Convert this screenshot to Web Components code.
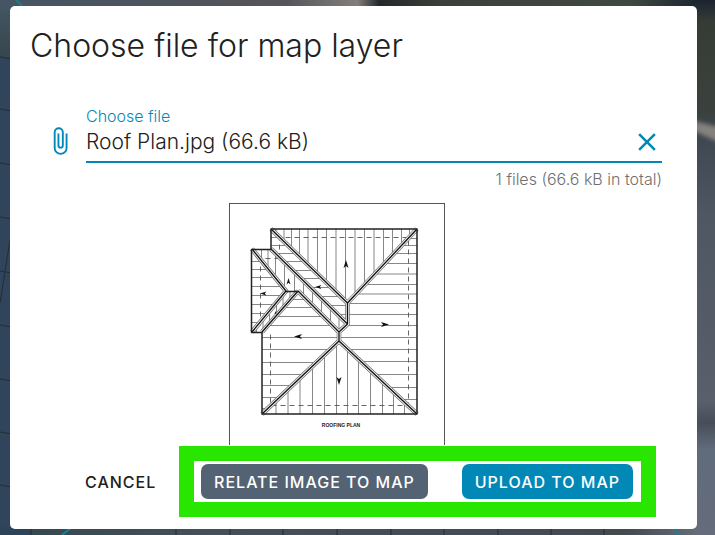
<!DOCTYPE html>
<html lang="en">
<head>
<meta charset="utf-8">
<meta name="viewport" content="width=device-width, initial-scale=1">
<title>Choose file for map layer</title>
<style>
  html, body { margin: 0; min-height: 100%; }
  body { font-family: Inter, "Open Sans", sans-serif; color: #212121; --accent: #0288b7; --slate: #536374; }
</style>
</head>
<body>
<map-backdrop>
  <upload-dialog heading="Choose file for map layer">
    <file-field label="Choose file" value="Roof Plan.jpg (66.6 kB)">1 files (66.6 kB in total)</file-field>
    <roof-preview></roof-preview>
    <action-button slot="actions" kind="text">CANCEL</action-button>
    <highlight-frame slot="actions">
      <action-button kind="slate">RELATE IMAGE TO MAP</action-button>
      <action-button kind="primary">UPLOAD TO MAP</action-button>
    </highlight-frame>
  </upload-dialog>
</map-backdrop>
<script>
const define = (name, html, setup) => {
  const template = document.createElement('template');
  template.innerHTML = html;
  customElements.define(name, class extends HTMLElement {
    connectedCallback() {
      if (this.shadowRoot) return;
      this.attachShadow({ mode: 'open' }).append(template.content.cloneNode(true));
      if (setup) setup(this, this.shadowRoot);
    }
  });
};

define('map-backdrop', `
<style>
  :host { display: grid; grid-template-areas: "all"; min-height: 100vh; background: #30455b; overflow: hidden; }
  .map { grid-area: all; width: 100%; height: 100%; min-height: 0; contain: size; }
  .content { grid-area: all; display: grid; padding: 6px 18px 6px 10px; z-index: 1; }
</style>
<svg class="map" viewBox="0 0 715 535" preserveAspectRatio="none" aria-hidden="true">
  <defs>
    <linearGradient id="side" x2="0" y2="1">
      <stop offset="0" stop-color="#1b2430"/><stop offset=".04" stop-color="#353c36"/><stop offset=".21" stop-color="#3b423d"/>
      <stop offset=".25" stop-color="#3e4650"/><stop offset=".4" stop-color="#4e5762"/>
      <stop offset=".75" stop-color="#595f6b"/><stop offset=".79" stop-color="#484e59"/><stop offset=".84" stop-color="#606b7c"/><stop offset="1" stop-color="#656c7b"/>
    </linearGradient>
    <linearGradient id="top">
      <stop offset="0" stop-color="#455563"/><stop offset=".28" stop-color="#50545b"/><stop offset=".4" stop-color="#56555a"/>
      <stop offset=".5" stop-color="#827e7b"/><stop offset=".53" stop-color="#24282b"/><stop offset=".62" stop-color="#3a4138"/>
      <stop offset=".88" stop-color="#404940"/><stop offset="1" stop-color="#111c2b"/>
    </linearGradient>
    <linearGradient id="foot">
      <stop offset="0" stop-color="#2d4357"/><stop offset=".04" stop-color="#2d4357"/><stop offset=".045" stop-color="#354850"/>
      <stop offset=".3" stop-color="#445059"/><stop offset=".7" stop-color="#424c57"/><stop offset=".9" stop-color="#424b50"/><stop offset="1" stop-color="#656c7b"/>
    </linearGradient>
    <linearGradient id="corner" x2="0" y2="1">
      <stop offset="0" stop-color="#465766"/><stop offset="1" stop-color="#35464d"/>
    </linearGradient>
    <filter id="soft"><feGaussianBlur stdDeviation="2"/></filter>
  </defs>
  <path fill="#30455b" d="M0 0H715V535H0z"/>
  <path fill="url(#corner)" d="M0 0H12V58L0 56z"/>
  <path fill="url(#top)" d="M0 0H715V8H0z"/>
  <path fill="url(#side)" d="M695 0H715V535H695z"/>
  <path fill="#85827e" filter="url(#soft)" d="M690 120L722 128V144L690 129z"/>
  <path fill="url(#foot)" d="M0 527H697V535H0z"/>
  <path stroke="#242d34" fill="none" d="M0 57l12 2M0 109l12 2M0 163l12 2M0 217l12 2M0 271l12 2M0 325l12 2M0 379l12 2M0 432l12 2M0 485l12 2M10 240L0 303M31 527v8M176 529v6M230 528v7M283 528v7M337 528v7M391 528v7M444 528v7M498 528v7M551 528v7M604 528v7"/>
  <path stroke="#168094" stroke-width="2" d="M16 0l8 8M62 535l10-8M672 527l7 8"/>
</svg>
<div class="content"><slot></slot></div>`);

define('upload-dialog', `
<style>
  :host { display: flex; flex-direction: column; min-width: 0; background: #fff; border-radius: 5px; box-sizing: border-box; }
  h1 { margin: 0; padding: 20px 20px 0; font-size: 32px; line-height: 40px; font-weight: 300; }
  main { flex: 1; display: flex; flex-direction: column; align-items: center; padding: 40px 35px 0 34px; }
  footer { display: flex; align-items: center; justify-content: space-between; padding: 0 41px 12px 62px; }
</style>
<h1></h1>
<main><slot></slot></main>
<footer><slot name="actions"></slot></footer>`, (host, root) => {
  host.setAttribute('role', 'dialog');
  root.querySelector('h1').textContent = host.getAttribute('heading');
});

define('file-field', `
<style>
  :host { display: grid; grid-template-columns: 32px 1fr; column-gap: 10px; align-self: stretch; }
  button { border: 0; background: none; padding: 0; color: var(--accent); cursor: pointer; display: grid; place-items: center; }
  svg { display: block; fill: currentColor; }
  .clip { margin-top: 12px; height: 46px; }
  label { display: block; font-size: 16px; line-height: 20px; color: var(--accent); font-weight: 300; }
  .line { display: flex; align-items: center; height: 35px; border-bottom: 2px solid var(--accent); }
  input { flex: 1; min-width: 0; border: 0; outline: 0; padding: 0 0 4px; background: none; font: inherit; font-size: 21px; line-height: 26px; font-weight: 300; color: inherit; }
  .line button { padding-bottom: 4px; }
  .hint { grid-column: 2; text-align: right; font-size: 16px; line-height: 20px; padding-top: 5px; color: #707070; font-weight: 300; }
</style>
<button class="clip" type="button" aria-label="Attach file"><svg width="30" height="30" viewBox="0 0 24 24"><path d="M16.5 6v11.5a4 4 0 0 1-8 0V5a2.5 2.5 0 0 1 5 0v10.500a1 1 0 0 1-2 0V6H10v9.500a2.500 2.500 0 0 0 5 0V5a4 4 0 0 0-8 0v12.500a5.500 5.500 0 0 0 11 0V6z"/></svg></button>
<div>
  <label for="file"></label>
  <div class="line"><input id="file" type="text" readonly><button type="button" aria-label="Clear file"><svg width="30" height="30" viewBox="0 0 24 24"><path d="M19 6.410L17.590 5 12 10.590 6.410 5 5 6.410 10.590 12 5 17.590 6.410 19 12 13.410 17.590 19 19 17.590 13.410 12z"/></svg></button></div>
</div>
<div class="hint"><slot></slot></div>`, (host, root) => {
  root.querySelector('label').textContent = host.getAttribute('label');
  root.querySelector('input').value = host.getAttribute('value');
});

define('roof-preview', `
<style>
  :host { display: block; width: 214px; max-width: 100%; margin-top: 14px; margin-right: 33px; border: 1px solid #555; border-bottom: 0; }
  svg { display: block; width: 100%; }
  .hatch { stroke: #555; stroke-width: .7; fill: none; }
  .roof { fill: none; stroke-linejoin: round; }
  text { font: bold 5px "Liberation Sans", sans-serif; fill: #222; }
</style>
<svg viewBox="230 205 214 241" role="img" aria-label="Roofing plan drawing">
  <defs>
    <clipPath id="n"><path d="M271 230H417L347.500 304z"/></clipPath>
    <clipPath id="e"><path d="M417 230V415L339 342V333L347.500 325V304z"/></clipPath>
    <clipPath id="s"><path d="M262 415L339 342L417 415z"/></clipPath>
    <clipPath id="w"><path d="M262 415V333L298 292L339 333V342z"/></clipPath>
    <clipPath id="b"><path d="M271 230L347.500 304V325L271 250z"/></clipPath>
    <clipPath id="m"><path d="M252 250H271L347.500 325L339 333L298 292H286z"/></clipPath>
    <clipPath id="l"><path d="M252 250L286 292L252 333z"/></clipPath>
    <clipPath id="k"><path d="M286 292H298L262 333H252z"/></clipPath>
    <path id="ridges" d="M271 230L347.500 304L417 230M347.500 304V325L339 333V342L417 415M339 342L262 415M271 250L347.500 325M252 250L286 292L252 333M298 292L262 333M298 292L339 333"/>
    <path id="arrow" d="M0-5L2.500 3L0 1L-2.500 3z"/>
  </defs>
  <g class="hatch">
    <path clip-path="url(#n)" d="M276 230v80M284 230v80M291.500 230v80M299.500 230v80M308 230v80M317.500 230v80M326.500 230v80M336 230v80M345.500 230v80M355 230v80M364.500 230v80M374 230v80M383.500 230v80M392.500 230v80M401.500 230v80M409.500 230v80"/>
    <path clip-path="url(#e)" d="M330 239.500h90M330 246.500h90M330 254.500h90M330 264.500h90M330 275h90M330 285.500h90M330 295h90M330 304.500h90M330 315.500h90M330 326.500h90M330 338.500h90M330 350.500h90M330 362.500h90M330 375.500h90M330 388.500h90M330 400.500h90"/>
    <path clip-path="url(#s)" d="M276 340v75M288 340v75M300 340v75M312.500 340v75M324.500 340v75M336.500 340v75M347.500 340v75M358.500 340v75M370.500 340v75M382.500 340v75M393.500 340v75M404.500 340v75"/>
    <path clip-path="url(#w)" d="M262 300.500h90M262 308.500h90M262 317.500h90M262 326.500h90M262 338.500h90M262 350.500h90M262 363.500h90M262 375.500h90M262 386.500h90M262 398.500h90M262 409.500h90"/>
    <path clip-path="url(#b)" d="M271 238.500h80M271 246.500h80M271 254.500h80M271 262.500h80M271 271.500h80M271 279.500h80M271 288.500h80M271 297.500h80M271 306.500h80M271 315.500h80"/>
    <path clip-path="url(#m)" d="M261.500 250v90M268 250v90M275.500 250v90M284.500 250v90M294.500 250v90M303.500 250v90M312.500 250v90M321.500 250v90M330.500 250v90M339 250v90"/>
    <path clip-path="url(#l)" d="M250 262.500h40M250 270.500h40M250 278.500h40M250 287.500h40M250 296.500h40M250 305.500h40M250 314.500h40M250 323.500h40"/>
    <path clip-path="url(#k)" d="M256.500 290v50M263 290v50M269.500 290v50M276.500 290v50M283 290v50M290 290v50"/>
  </g>
  <path fill="none" stroke="#555" stroke-width=".9" stroke-dasharray="5 4" d="M279.500 259.500V238.500H408.500V406.500H270.500V332M279.500 259.500H260.500V330"/>
  <g class="roof">
    <use href="#ridges" stroke="#666" stroke-width="4.600"/>
    <use href="#ridges" stroke="#eee" stroke-width="3.300"/>
    <use href="#ridges" stroke="#111" stroke-width="1.300"/>
    <path stroke="#222" stroke-width="1.500" d="M271 230H417V415H262V333.500H251.500V250.500H271zM286 292.500H298"/>
  </g>
  <g fill="#111">
    <use href="#arrow" transform="translate(346 266)"/>
    <use href="#arrow" transform="translate(384 325.500) rotate(90)"/>
    <use href="#arrow" transform="translate(299 337.500) rotate(-90)"/>
    <use href="#arrow" transform="translate(339 381) rotate(180)"/>
    <use href="#arrow" transform="translate(288.500 283) scale(.8)"/>
    <use href="#arrow" transform="translate(264 294.500) rotate(-90) scale(.8)"/>
    <use href="#arrow" transform="translate(319 288) rotate(-90) scale(.8)"/>
    <use href="#arrow" transform="translate(275.500 314) scale(.4)"/>
  </g>
  <text x="341" y="428" text-anchor="middle">ROOFING PLAN</text>
</svg>`);

define('highlight-frame', `
<style>
  :host { display: flex; flex-wrap: wrap; gap: 34px; border: 15px solid #29e600; background: #fff; padding: 3px 8px 3px 7px; }
</style>
<slot></slot>`);

define('action-button', `
<style>
  :host { display: block; }
  button { display: block; border: 0; border-radius: 7px; background: none; padding: 0 13px; height: 35px; font: inherit; font-size: 16px; font-weight: 500; letter-spacing: 1px; color: #fff; cursor: pointer; white-space: nowrap; }
  :host([kind="text"]) button { color: inherit; }
  :host([kind="slate"]) button { background: var(--slate); }
  :host([kind="primary"]) button { background: var(--accent); }
</style>
<button type="button"><slot></slot></button>`);
</script>
</body>
</html>
